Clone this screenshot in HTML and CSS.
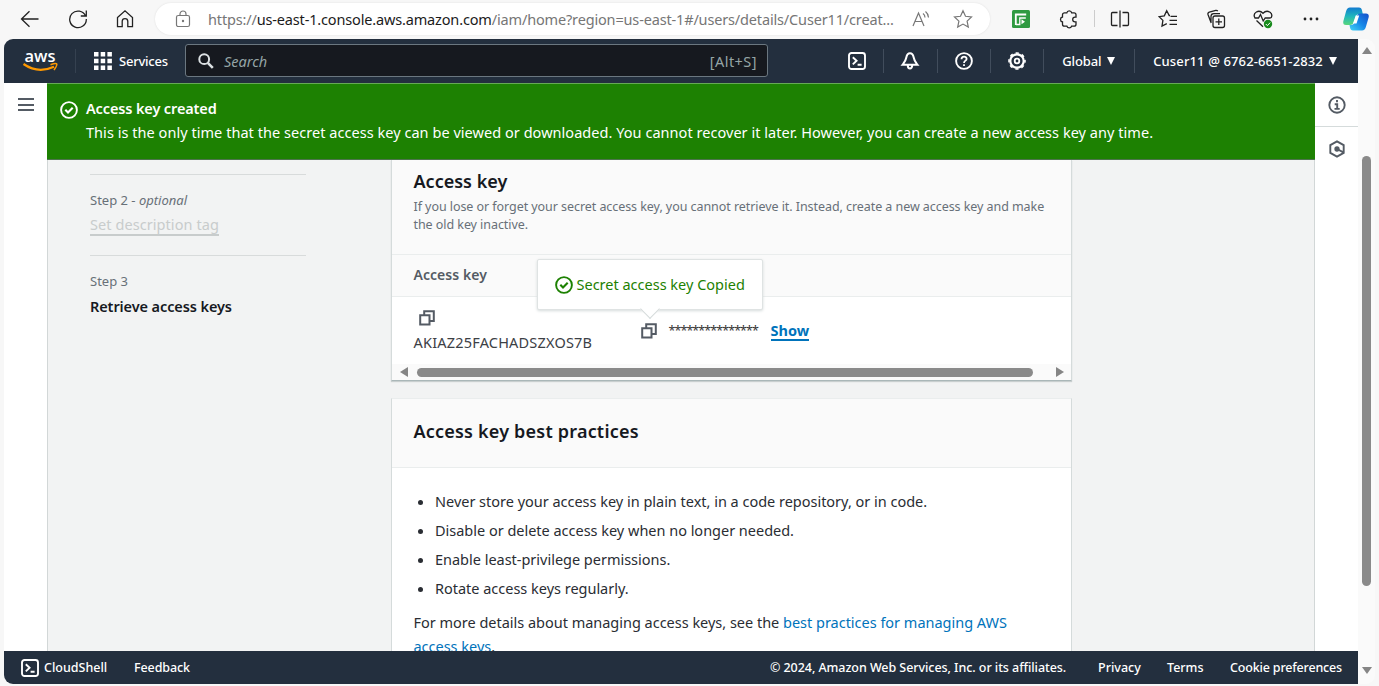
FILE: index.html
```html
<!DOCTYPE html>
<html lang="en">
<head>
<meta charset="utf-8">
<title>Retrieve access keys | IAM</title>
<link rel="stylesheet" href="styles.css">
</head>
<body>
<svg class="defs" aria-hidden="true">
  <symbol id="shell" viewBox="0 0 18 18"><rect x="1" y="1" width="16" height="16" rx="2.5" fill="none" stroke="currentColor" stroke-width="1.9"/><path d="M4.800 5.200 8.600 8.800 4.800 12.400M9.600 12.800h4" fill="none" stroke="currentColor" stroke-width="1.9"/></symbol>
  <symbol id="check" viewBox="0 0 18 18"><circle cx="9" cy="9" r="7.900" fill="none" stroke="currentColor" stroke-width="1.9"/><path d="M5.300 8.800 8 11.500 12.700 6.800" fill="none" stroke="currentColor" stroke-width="2.1"/></symbol>
  <symbol id="copy" viewBox="0 0 16 16"><path d="M1.200 5.200h9.300v9.300H1.200zM5.200 5V1.200h9.600v9.700h-4" fill="none" stroke="currentColor" stroke-width="2"/></symbol>
</svg>

<div class="toolbar">
  <svg class="tb back" viewBox="0 0 20 20"><path d="M18.500 10H1.800M9.500 2.200 1.500 10l8 7.800"/></svg>
  <svg class="tb reload" viewBox="0 0 20 20"><path d="M17.600 7A8.300 8.300 0 1 0 18.300 10M18.300 1.500V7h-5.500"/></svg>
  <svg class="tb home" viewBox="0 0 20 20"><path d="M2.500 8.500 10 1.800l7.500 6.700v9.200h-4.700v-5.200a2.800 2.800 0 0 0-5.600 0v5.200H2.500z"/></svg>
  <div class="address">
    <svg class="lock" viewBox="0 0 16 18"><rect x="1.500" y="5.500" width="13" height="11" rx="1.800"/><path d="M5 5.500V4a3 3 0 0 1 6 0v1.500"/><circle cx="8" cy="11" r=".6"/></svg>
    <span class="url">https://<b>us-east-1.console.aws.amazon.com</b>/iam/home?region=us-east-1#/users/details/Cuser11/creat...</span>
    <svg class="aloud" viewBox="0 0 20 18"><path d="M1 16 6.500 3 12 16M3 11.500h7M11 3.500a5 5 0 0 1 2 4M13.500 1.500a8 8 0 0 1 3 6"/></svg>
    <svg class="fav" viewBox="0 0 20 20"><path d="m10 1.800 2.500 5.500 6 .7-4.400 4.100 1.200 6L10 15.100l-5.300 3 1.200-6L1.500 8l6-.7z"/></svg>
  </div>
  <svg class="tb ext" viewBox="0 0 18 18"><rect width="18" height="18" rx="1.500" fill="#2f9a41" stroke="none"/><path d="M3.800 15V4.500h10.400" stroke="#fff" stroke-width="1.800"/><path d="M4 14.500h3.800V8h6" stroke="#fff" stroke-width="1.300"/><path d="m9.500 9.300 3.500 2.500-3.500 2.500z" fill="#fff" stroke="none"/></svg>
  <svg class="tb puzzle" viewBox="0 0 20 20"><path d="M5.500 3.800h2.300a2.500 2.500 0 0 1 4.900 0h2.300a2 2 0 0 1 2 2v2.400h-1a2.300 2.300 0 0 0 0 4.600h1v2.400a2 2 0 0 1-2 2h-2.400a2.500 2.500 0 0 1-4.700 0H5.500a2 2 0 0 1-2-2v-2.300a2.500 2.500 0 0 1 0-4.900V5.800a2 2 0 0 1 2-2z"/></svg>
  <span class="bar"></span>
  <svg class="tb split" viewBox="0 0 20 20"><path d="M7.500 3.500h-5a1 1 0 0 0-1 1v11a1 1 0 0 0 1 1h5M12.500 3.500h5a1 1 0 0 1 1 1v11a1 1 0 0 1-1 1h-5M10 1.500v17"/></svg>
  <svg class="tb favs" viewBox="0 0 20 20"><path d="M12 6.500h-.8L8.700 1.800 6.300 6.900l-5.200.8 3.800 3.700-.9 5.700 4.800-2.500M12.500 7.300H19M11.500 11.300H19M11.500 15.300H19"/></svg>
  <svg class="tb coll" viewBox="0 0 20 20"><rect x="7" y="7" width="11.500" height="11.500" rx="2"/><path d="M12.800 9.500v6.500M9.500 12.800H16M5.200 14 2 5.500a2 2 0 0 1 1.300-2.400l6.500-1.700a2 2 0 0 1 2 .8M5 13V7.500a2.800 2.800 0 0 1 2.800-2.800H14"/></svg>
  <svg class="tb heart" viewBox="0 0 20 20"><path d="M2 9C-1 3.500 6 0 10 4.300 14 0 21 3.500 18 9M1.500 9h4l2-3.500L10.200 12l2-3h5.500M3.500 11.500l6.500 6.300"/><circle cx="15" cy="15" r="4.200" fill="#188a1c" stroke="none"/><path d="m12.800 15 1.600 1.600 2.800-3" stroke="#fff" stroke-width="1"/></svg>
  <svg class="tb dots" viewBox="0 0 20 20"><g fill="#222" stroke="none"><circle cx="4" cy="10" r="1.400"/><circle cx="10" cy="10" r="1.400"/><circle cx="16" cy="10" r="1.400"/></g></svg>
  <svg class="copilot" viewBox="0 0 26 24">
    <defs>
      <linearGradient id="ga" x2="0" y2="1"><stop stop-color="#127bd0"/><stop offset=".5" stop-color="#20b6bc"/><stop offset="1" stop-color="#58d67b"/></linearGradient>
      <linearGradient id="gb" x1="1" x2="0" y2="1"><stop stop-color="#164ec8"/><stop offset=".5" stop-color="#1687e8"/><stop offset="1" stop-color="#42d5f4"/></linearGradient>
    </defs>
    <path d="M7 .5h9q2.500 0 3 3l.8 3.500H16q-2.500 0-3.300 3l-1.800 5Q9.700 18 7 18H3q-3.500 0-2.600-4L3 4.500Q4 .5 7 .5z" fill="url(#ga)"/>
    <path d="M19 23.500h-9q-2.500 0-3-3L6.500 18H8q2.800 0 3.700-3l1.600-5q.9-3.500 3.700-3.500h6q3.500 0 2.600 4L23 19.500Q22 23.500 19 23.500z" fill="url(#gb)"/>
    <path d="M12.700 8.500h3.500l-2.700 8H10z" fill="#fff"/>
  </svg>
</div>

<div class="window">
  <div class="page">
    <header class="top">
      <svg class="aws" viewBox="0 0 36 24"><text x="1.500" y="12.500" textLength="31" lengthAdjust="spacingAndGlyphs">aws</text><path d="M.5 15Q15 25 31 17.700" fill="none" stroke="#f90" stroke-width="2.200"/><path d="M27.500 15.700Q33 13.800 33.700 15T31 21" fill="none" stroke="#f90" stroke-width="1.600"/></svg>
      <span class="sep"></span>
      <svg class="grid" viewBox="0 0 18 18"><path d="M0 0h4.500v4.500H0zM6.700 0h4.500v4.500H6.700zM13.400 0h4.500v4.500h-4.500zM0 6.700h4.500v4.500H0zM6.700 6.700h4.500v4.500H6.700zM13.400 6.700h4.500v4.500h-4.500zM0 13.400h4.500v4.500H0zM6.700 13.400h4.500v4.500H6.700zM13.400 13.400h4.500v4.500h-4.500z" fill="#fff"/></svg>
      <span class="services">Services</span>
      <div class="search">
        <svg viewBox="0 0 16 16"><circle cx="6.200" cy="6.200" r="4.900" fill="none" stroke="#dce1e3" stroke-width="2"/><path d="m9.800 9.800 5 5" stroke="#dce1e3" stroke-width="2.600"/></svg>
        <i>Search</i><span class="alt">[Alt+S]</span>
      </div>
      <div class="tools">
        <span class="tool"><svg viewBox="0 0 18 18"><use href="#shell"/></svg></span>
        <span class="tool"><svg viewBox="0 0 18 18"><path d="M9 1.200C6.700 1.200 5.700 3.500 5.300 5.500 4.700 9 3.700 10 1.500 12.800h15C14.300 10 13.300 9 12.700 5.500 12.300 3.500 11.300 1.200 9 1.200zM6.800 13.500a2.200 2.900 0 0 0 4.400 0" fill="none" stroke="#fff" stroke-width="2"/></svg></span>
        <span class="tool"><svg viewBox="0 0 18 18"><circle cx="9" cy="9" r="7.900" fill="none" stroke="#fff" stroke-width="1.900"/><path d="M6.500 7.300C6.500 3.700 11.700 4 11.600 7c0 1.600-2.600 1.800-2.600 4M9 12.200v1.900" fill="none" stroke="#fff" stroke-width="1.800"/></svg></span>
        <span class="tool"><svg viewBox="0 0 18 18"><circle cx="9" cy="9" r="6.700" fill="none" stroke="#fff" stroke-width="2.200"/><circle cx="9" cy="9" r="8" fill="none" stroke="#fff" stroke-width="1.600" stroke-dasharray="3.200 3.083" stroke-dashoffset="1.600"/><circle cx="9" cy="9" r="2.300" fill="none" stroke="#fff" stroke-width="1.800"/></svg></span>
      </div>
      <span class="region">Global</span><span class="caret"></span>
      <span class="sep2"></span>
      <span class="account">Cuser11 @ 6762-6651-2832</span><span class="caret"></span>
    </header>

    <div class="body">
      <aside class="left"><span></span><span></span><span></span></aside>
      <main class="main">
        <div class="flash">
          <svg viewBox="0 0 18 18"><use href="#check"/></svg>
          <div><div class="flash-title">Access key created</div><div class="flash-text">This is the only time that the secret access key can be viewed or downloaded. You cannot recover it later. However, you can create a new access key any time.</div></div>
        </div>
        <div class="content">
          <nav class="steps">
            <div class="step"><div class="step-no">Step 2 - <i>optional</i></div><span class="step-link">Set description tag</span></div>
            <div class="step"><div class="step-no">Step 3</div><div class="step-now">Retrieve access keys</div></div>
          </nav>
          <div class="cards">
            <section class="card keys">
              <div class="intro"><h2>Access key</h2><p>If you lose or forget your secret access key, you cannot retrieve it. Instead, create a new access key and make<br>the old key inactive.</p></div>
              <div class="thead">Access key</div>
              <div class="row">
                <div class="key"><svg viewBox="0 0 16 16"><use href="#copy"/></svg><span>AKIAZ25FACHADSZXOS7B</span></div>
                <div class="secret"><svg viewBox="0 0 16 16"><use href="#copy"/></svg><span class="stars">***************</span><a class="show">Show</a>
                  <div class="tip"><svg viewBox="0 0 18 18"><use href="#check"/></svg><span>Secret access key Copied</span></div>
                </div>
              </div>
              <div class="hscroll"><span class="al"></span><span class="thumb"></span><span class="ar"></span></div>
            </section>
            <section class="card best">
              <h2>Access key best practices</h2>
              <ul><li>Never store your access key in plain text, in a code repository, or in code.</li><li>Disable or delete access key when no longer needed.</li><li>Enable least-privilege permissions.</li><li>Rotate access keys regularly.</li></ul>
              <p>For more details about managing access keys, see the <a>best practices for managing AWS<br>access keys</a>.</p>
            </section>
          </div>
        </div>
      </main>
      <aside class="right">
        <div><svg viewBox="0 0 18 18"><circle cx="9" cy="9" r="7.700"/><path d="M9 4v2.200M6.700 8.200h2.500v4.500M6.500 12.900h5.200"/></svg></div>
        <div><svg viewBox="0 0 18 18"><path d="m9 1.300 6.700 3.800v7.800L9 16.700l-6.700-3.800V5.100zM9 9l6 3.200"/><circle cx="9" cy="9" r="1.700" fill="#545b64"/></svg></div>
      </aside>
    </div>

    <footer class="foot">
      <svg viewBox="0 0 18 18"><use href="#shell"/></svg><span class="f1">CloudShell</span><span class="f2">Feedback</span>
      <span class="f3">© 2024, Amazon Web Services, Inc. or its affiliates.</span><span class="f4">Privacy</span><span class="f5">Terms</span><span class="f6">Cookie preferences</span>
    </footer>
  </div>
  <div class="vscroll"><span class="up"></span><span class="vthumb"></span><span class="down"></span></div>
</div>
</body>
</html>
```
FILE: styles.css
```css
* { box-sizing: border-box; }
body { margin: 0; width: 1379px; height: 686px; overflow: hidden; background: #f7f7f7; font-family: "Noto Sans", "Open Sans", sans-serif; color: #16191f; white-space: nowrap; display: flex; flex-direction: column; }
svg { display: block; flex: none; }
h2, p, ul { margin: 0; padding: 0; }
.defs { position: absolute; width: 0; height: 0; }

/* browser toolbar */
.toolbar { height: 39px; flex: none; padding-bottom: 2px; display: flex; align-items: center; }
.tb { width: 20px; height: 20px; fill: none; stroke: #222; stroke-width: 1.3; }
.back { margin-left: 20px; }
.reload { margin-left: 28px; }
.home { margin-left: 27px; }
.address { width: 835px; height: 32px; margin-left: 20px; border-radius: 16px; background: #fff; box-shadow: 0 0 2px #ddd; display: flex; align-items: center; }
.address svg { fill: none; stroke: #777; stroke-width: 1.2; }
.lock { width: 16px; height: 18px; margin-left: 20px; }
.url { width: 704px; margin-left: 17px; font-size: 14.5px; letter-spacing: -0.158px; line-height: 20px; color: #767676; }
.url b { font-weight: 400; color: #1b1b1b; }
.aloud { width: 20px; height: 18px; }
.fav { width: 20px; height: 20px; margin-left: 21px; }
.ext { width: 18px; height: 18px; margin-left: 22px; }
.puzzle { margin-left: 29px; }
.bar { width: 1px; height: 17px; margin-left: 15px; background: #ccc; }
.split { margin-left: 15px; }
.favs { margin-left: 28px; }
.coll, .heart, .dots { margin-left: 27.5px; }
.copilot { width: 26px; height: 24px; margin-left: 22px; }

.window { height: 645px; margin: 0 4px; display: flex; border-radius: 9px; overflow: hidden; }
.page { width: 1354px; display: flex; flex-direction: column; }

/* console header */
.top { height: 44px; flex: none; padding-bottom: 1px; background: #232f3e; color: #fff; display: flex; align-items: center; font-size: 13px; font-weight: 500; }
.aws { width: 36px; height: 24px; margin-left: 19px; overflow: visible; }
.aws text { font: 600 16px "Open Sans", sans-serif; fill: #fff; }
.sep { width: 1px; height: 24px; margin-left: 16px; background: #354150; }
.grid { width: 18px; height: 18px; margin-left: 18px; }
.services { width: 66px; margin-left: 7px; letter-spacing: -0.22px; }
.search { width: 583px; height: 33px; border: 1px solid #6b7780; border-radius: 3px; background: #16191f; color: #95a5a6; display: flex; align-items: center; font-size: 14px; font-weight: 400; }
.search svg { width: 16px; height: 16px; margin: 0 10px 0 12px; }
.search i { font-size: 14.5px; }
.alt { margin: 0 10px 0 auto; font-size: 14.5px; letter-spacing: 0.45px; }
.tools { margin-left: 63px; display: flex; }
.tool { width: 53.300px; height: 24px; padding-left: 17px; border-right: 1px solid #414d5c; display: flex; align-items: center; }
.tool svg { width: 18px; height: 18px; overflow: visible; }
.region { width: 38px; margin-left: 18px; letter-spacing: -0.12px; }
.caret { margin-left: 7px; border: 4.500px solid transparent; border-top: 8px solid #fff; border-bottom: 0; }
.sep2 { width: 1px; height: 24px; margin-left: 19px; background: #414d5c; }
.account { width: 169px; margin-left: 18px; letter-spacing: 0.13px; }

.body { height: 568px; flex: none; display: flex; overflow: hidden; background: #fff; }
.left { width: 43px; padding: 15px 0 0 14px; display: flex; flex-direction: column; gap: 3.500px; }
.left span { width: 16px; height: 2px; background: #545b64; }
.main { width: 1268px; border-left: 1px solid #d2d7d7; border-right: 1px solid #d2d7d7; background: #f2f3f3; }
.flash { height: 77px; margin: 0 -1px; padding: 16px 0 0 13px; background: #1d8102; border-top: 1px solid #66a956; border-bottom: 1px solid #4d744d; color: #fff; display: flex; }
.flash svg { width: 18px; height: 18px; margin: 1px 8px 0 0; }
.flash-title, .flash-text { font-size: 14.5px; line-height: 24px; margin-top: -4px; }
.flash-title { font-weight: 600; letter-spacing: -0.13px; }
.flash-text { margin-top: 0; letter-spacing: 0.043px; }

.content { display: flex; }
.steps { width: 343px; padding: 14px 85px 0 42px; }
.step { height: 81px; border-top: 1px solid #d8dbdb; padding-top: 15px; }
.step-no { font-size: 13px; line-height: 20px; color: #687078; }
.step-link { display: inline-block; margin-top: 5px; font-size: 14.5px; letter-spacing: 0.07px; line-height: 19px; color: #c8cccc; border-bottom: 2px solid #c8cccc; }
.step-now { margin-top: 4px; font-size: 14.5px; line-height: 22px; font-weight: 600; letter-spacing: -0.1px; }
.cards { width: 681px; display: flex; flex-direction: column; gap: 17px; }
.card { background: #fff; border-left: 1px solid #d5dbdb; border-right: 1px solid #d5dbdb; }
.card h2 { font-size: 18px; line-height: 24px; font-weight: 600; }
.keys { height: 221px; border-bottom: 1px solid #aab7b8; box-shadow: 0 1px 1px #c9cfcf; }
.intro { height: 95px; padding: 9px 21.5px 0; background: #fafafa; border-bottom: 1px solid #eaeded; }
.intro p { margin-top: 5px; font-size: 12.5px; letter-spacing: -0.062px; line-height: 17.500px; color: #687078; }
.thead { height: 42px; padding: 9px 21.5px; background: #fafafa; border-bottom: 1px solid #eaeded; font-size: 14px; line-height: 22px; font-weight: 600; color: #545b64; letter-spacing: .05px; }
.row { height: 67px; display: flex; padding-left: 21.5px; }
.row svg { width: 16px; height: 16px; color: #545b64; }
.key { width: 227px; padding-top: 13px; font-size: 14.5px; letter-spacing: 0.2px; line-height: 22px; color: #3c4045; }
.key svg { margin: 0 0 5px 5px; }
.secret { position: relative; padding-top: 17px; height: 50px; display: flex; align-items: center; }
.stars { width: 91px; margin: 0 11px 0 12px; font-size: 12.5px; letter-spacing: -0.92px; color: #333; }
.show { color: #0073bb; font-size: 14.5px; line-height: 18px; font-weight: 700; border-bottom: 2px solid #0073bb; }
.tip { position: absolute; left: -104px; top: -38px; width: 226px; height: 51px; background: #fff; border: 1px solid #dfe3e3; border-radius: 2px; box-shadow: 0 1px 3px #d5dbdb; display: flex; align-items: center; padding: 0 0 2px 17px; color: #1d8102; font-size: 14.5px; }
.tip::after { content: ""; position: absolute; left: 105px; bottom: -7px; width: 13px; height: 13px; background: #fff; border-right: 1px solid #d5dbdb; border-bottom: 1px solid #d5dbdb; transform: rotate(45deg); }
.tip svg { width: 18px; height: 18px; margin-right: 4px; color: #1d8102; position: relative; top: 1px; }
.hscroll { height: 16px; background: #fafafa; display: flex; align-items: center; }
.al { margin-left: 8px; border: 5px solid transparent; border-right: 8px solid #858585; border-left: 0; }
.thumb { width: 616px; height: 9px; margin-left: 9px; border-radius: 5px; background: #8a8a8a; }
.ar { margin-left: 23px; border: 5px solid transparent; border-left: 8px solid #858585; border-right: 0; }
.best { height: 300px; border-top: 1px solid #eaeded; color: #2a2d33; }
.best h2 { height: 69px; padding: 20px 21.5px; background: #fafafa; border-bottom: 1px solid #eaeded; color: #16191f; letter-spacing: 0.2px; }
.best ul { padding: 19px 0 0 43px; font-size: 14.5px; letter-spacing: -0.015px; line-height: 29px; }
.best p { padding: 7px 21.5px; font-size: 14.5px; letter-spacing: -0.015px; line-height: 24px; }
.best a { color: #0073bb; }

.right { width: 43px; }
.right div { height: 44px; display: flex; align-items: center; justify-content: center; border-bottom: 1px solid #d5dbdb; }
.right div + div { border: 0; }
.right svg { width: 18px; height: 18px; fill: none; stroke: #545b64; stroke-width: 1.900; }

.foot { height: 33px; flex: none; background: #232f3e; color: #fff; display: flex; align-items: center; font-size: 12.5px; font-weight: 500; }
.foot svg { width: 18px; height: 18px; margin-left: 17px; }
.f1 { width: 90px; margin-left: 5px; }
.f2 { width: 636px; letter-spacing: -0.1px; }
.f3 { width: 328px; letter-spacing: -0.06px; }
.f4 { width: 69px; }
.f5 { width: 63px; }
.f6 { letter-spacing: -0.17px; }

.vscroll { width: 17px; background: #fafafa; display: flex; flex-direction: column; align-items: center; }
.up { margin-top: 8px; border: 5px solid transparent; border-bottom: 7px solid #858585; border-top: 0; }
.vthumb { width: 9px; height: 430px; margin-top: 102px; border-radius: 5px; background: #8a8a8a; }
.down { margin-top: 81px; border: 5px solid transparent; border-top: 7px solid #858585; border-bottom: 0; }
```
